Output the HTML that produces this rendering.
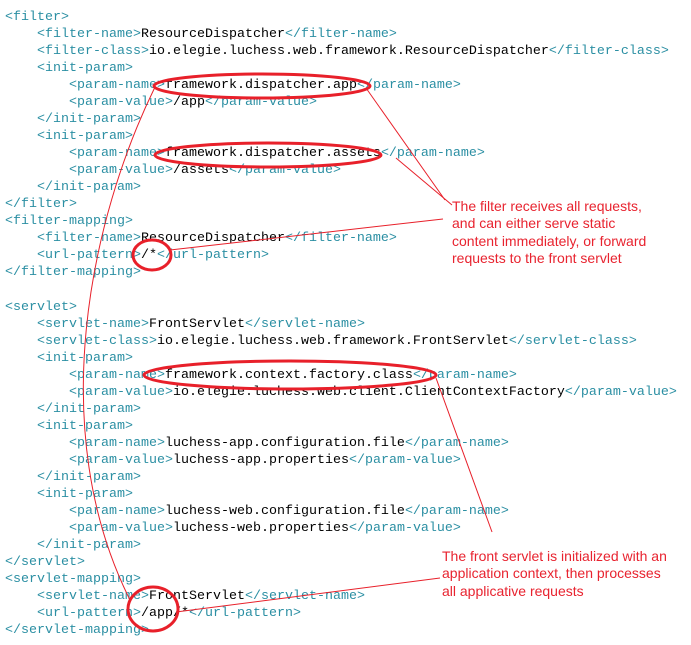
<!DOCTYPE html>
<html><head><meta charset="utf-8"><style>
body{margin:0;background:#fff;width:691px;height:645px;overflow:hidden;position:relative}
pre{position:absolute;left:5px;top:9px;margin:0;font-family:"Liberation Mono",monospace;font-size:13.33px;line-height:17.03px;color:#000}
.t{color:#2b8fa3}
.n{position:absolute;font-family:"Liberation Sans",sans-serif;font-size:14px;line-height:17.3px;color:#e8232f;white-space:nowrap}
svg{position:absolute;left:0;top:0}
</style></head><body>
<pre><span class="t">&lt;filter&gt;</span>
    <span class="t">&lt;filter-name&gt;</span>ResourceDispatcher<span class="t">&lt;/filter-name&gt;</span>
    <span class="t">&lt;filter-class&gt;</span>io.elegie.luchess.web.framework.ResourceDispatcher<span class="t">&lt;/filter-class&gt;</span>
    <span class="t">&lt;init-param&gt;</span>
        <span class="t">&lt;param-name&gt;</span>framework.dispatcher.app<span class="t">&lt;/param-name&gt;</span>
        <span class="t">&lt;param-value&gt;</span>/app<span class="t">&lt;/param-value&gt;</span>
    <span class="t">&lt;/init-param&gt;</span>
    <span class="t">&lt;init-param&gt;</span>
        <span class="t">&lt;param-name&gt;</span>framework.dispatcher.assets<span class="t">&lt;/param-name&gt;</span>
        <span class="t">&lt;param-value&gt;</span>/assets<span class="t">&lt;/param-value&gt;</span>
    <span class="t">&lt;/init-param&gt;</span>
<span class="t">&lt;/filter&gt;</span>
<span class="t">&lt;filter-mapping&gt;</span>
    <span class="t">&lt;filter-name&gt;</span>ResourceDispatcher<span class="t">&lt;/filter-name&gt;</span>
    <span class="t">&lt;url-pattern&gt;</span>/*<span class="t">&lt;/url-pattern&gt;</span>
<span class="t">&lt;/filter-mapping&gt;</span>

<span class="t">&lt;servlet&gt;</span>
    <span class="t">&lt;servlet-name&gt;</span>FrontServlet<span class="t">&lt;/servlet-name&gt;</span>
    <span class="t">&lt;servlet-class&gt;</span>io.elegie.luchess.web.framework.FrontServlet<span class="t">&lt;/servlet-class&gt;</span>
    <span class="t">&lt;init-param&gt;</span>
        <span class="t">&lt;param-name&gt;</span>framework.context.factory.class<span class="t">&lt;/param-name&gt;</span>
        <span class="t">&lt;param-value&gt;</span>io.elegie.luchess.web.client.ClientContextFactory<span class="t">&lt;/param-value&gt;</span>
    <span class="t">&lt;/init-param&gt;</span>
    <span class="t">&lt;init-param&gt;</span>
        <span class="t">&lt;param-name&gt;</span>luchess-app.configuration.file<span class="t">&lt;/param-name&gt;</span>
        <span class="t">&lt;param-value&gt;</span>luchess-app.properties<span class="t">&lt;/param-value&gt;</span>
    <span class="t">&lt;/init-param&gt;</span>
    <span class="t">&lt;init-param&gt;</span>
        <span class="t">&lt;param-name&gt;</span>luchess-web.configuration.file<span class="t">&lt;/param-name&gt;</span>
        <span class="t">&lt;param-value&gt;</span>luchess-web.properties<span class="t">&lt;/param-value&gt;</span>
    <span class="t">&lt;/init-param&gt;</span>
<span class="t">&lt;/servlet&gt;</span>
<span class="t">&lt;servlet-mapping&gt;</span>
    <span class="t">&lt;servlet-name&gt;</span>FrontServlet<span class="t">&lt;/servlet-name&gt;</span>
    <span class="t">&lt;url-pattern&gt;</span>/app/*<span class="t">&lt;/url-pattern&gt;</span>
<span class="t">&lt;/servlet-mapping&gt;</span></pre>
<div class="n" style="left:452px;top:198px">The filter receives all requests,<br>and can either serve static<br>content immediately, or forward<br>requests to the front servlet</div>
<div class="n" style="left:442px;top:548px">The front servlet is initialized with an<br>application context, then processes<br>all applicative requests</div>
<svg width="691" height="645" fill="none" stroke="#e8202a">
<g stroke-width="3">
<ellipse cx="262" cy="86" rx="108" ry="12"/>
<ellipse cx="268" cy="155" rx="113" ry="12"/>
<ellipse cx="152" cy="255" rx="19" ry="15"/>
<ellipse cx="290" cy="375" rx="146" ry="14"/>
<ellipse cx="153" cy="609" rx="25" ry="22"/>
</g>
<g stroke-width="1">
<line x1="366" y1="88" x2="445" y2="200"/>
<line x1="396" y1="158" x2="452" y2="205"/>
<line x1="170" y1="250" x2="443" y2="219"/>
<path d="M155 87 C90 220 45 430 130 600"/>
<line x1="436" y1="378" x2="492" y2="532"/>
<line x1="176" y1="612" x2="440" y2="578"/>
</g>
</svg>
</body></html>
